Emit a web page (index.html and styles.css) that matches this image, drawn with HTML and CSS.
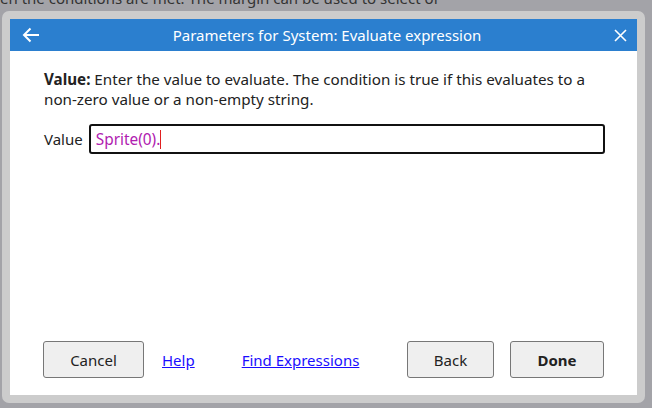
FILE: index.html
```html
<!DOCTYPE html>
<html lang="en">
<head>
	<meta charset="UTF-8">
	<title>Parameters for System: Evaluate expression</title>
	<link rel="stylesheet" href="styles.css">
</head>
<body>
	<p class="page-text">en the conditions are met. The margin can be used to select of</p>
	<div class="frame">
		<div class="dialog">
			<header class="titlebar">
				<span class="back-icon">
					<svg width="18" height="16" viewBox="0 0 18 16"><path d="M17 8H2M8.5 1.5L2 8l6.5 6.5" fill="none" stroke="#fff" stroke-width="2"/></svg>
				</span>
				<h1>Parameters for System: Evaluate expression</h1>
				<span class="close-icon">
					<svg width="13" height="13" viewBox="0 0 13 13"><path d="M1 1l11 11M12 1L1 12" fill="none" stroke="#fff" stroke-width="1.6"/></svg>
				</span>
			</header>
			<section class="content">
				<p class="desc"><b>Value:</b> Enter the value to evaluate. The condition is true if this evaluates to a<br>non-zero value or a non-empty string.</p>
				<div class="param-row">
					<label>Value</label>
					<div class="value-input">Sprite(0)<span class="sel">.</span><span class="caret"></span></div>
				</div>
			</section>
			<footer class="buttons">
				<button class="btn cancel">Cancel</button>
				<a href="#" class="link help">Help</a>
				<a href="#" class="link find">Find Expressions</a>
				<button class="btn back">Back</button>
				<button class="btn done">Done</button>
			</footer>
		</div>
	</div>
</body>
</html>
```

FILE: styles.css
```css
*{
	box-sizing:border-box;
	margin:0;
	padding:0;
}
body{
	width:652px;
	height:408px;
	overflow:hidden;
	background:#a3a3a8;
	font-family:"Noto Sans","Open Sans",sans-serif;
	font-size:14px;
	color:#222;
	position:relative;
}
.page-text{
	margin-top:-12px;
	font-size:15px;
	color:#333;
	white-space:nowrap;
}
.frame{
	position:absolute;
	left:2px;
	top:11px;
	width:643px;
	height:392px;
	padding:8px;
	background:#cccccc;
	border-radius:7px;
}
.dialog{
	display:flex;
	flex-direction:column;
	height:100%;
	background:#fff;
}
.titlebar{
	display:flex;
	align-items:center;
	height:32px;
	background:#2b7fcf;
	color:#fff;
	padding:0 10px 0 12px;
}
.titlebar h1{
	flex:1;
	text-align:center;
	font-size:15px;
	font-weight:normal;
}
.back-icon, .close-icon{
	display:flex;
}
.content{
	flex:1;
	padding:18px 20px 0 34px;
}
.desc{
	font-size:15.2px;
	line-height:20px;
	color:#222;
	white-space:nowrap;
}
.desc b{
	font-weight:bold;
}
.param-row{
	display:flex;
	align-items:center;
	margin-top:15px;
	margin-right:12px;
}
.param-row label{
	font-size:15px;
	margin-right:6px;
}
.value-input{
	flex:1;
	height:30px;
	border:2px solid #111;
	border-radius:3px;
	padding:3px 5px;
	font-size:15.4px;
	color:#b020b0;
	display:flex;
	align-items:center;
}
.caret{
	display:inline-block;
	width:1px;
	height:19px;
	background:#e02020;
}
.buttons{
	display:flex;
	align-items:center;
	padding:0 0 17px 33px;
}
.btn{
	height:37px;
	background:#efefef;
	border:1px solid #777;
	border-radius:3px;
	font-family:inherit;
	font-size:15px;
	color:#222;
}
.cancel{
	width:101px;
}
.back{
	width:87px;
	margin-left:auto;
}
.done{
	width:94px;
	margin-left:16px;
	margin-right:33px;
	font-weight:bold;
}
.link{
	color:#1a0dff;
	text-decoration:underline;
	font-size:15px;
}
.help{
	margin-left:18px;
}
.find{
	margin-left:47px;
}
```
